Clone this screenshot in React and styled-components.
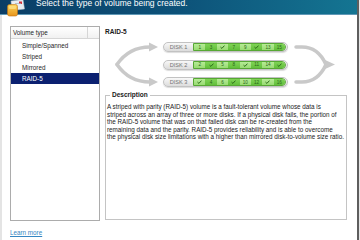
import styled, { createGlobalStyle } from "styled-components";

const GlobalStyle = createGlobalStyle`
  html, body {
    margin: 0;
    padding: 0;
    background: #e6e6e6;
  }
  body {
    font-family: "Liberation Sans", Arial, sans-serif;
  }
`;

const Screen = styled.div`
  display: flex;
  width: 360px;
  height: 240px;
  overflow: hidden;
  background: #e6e6e6;
`;

const Frame = styled.div`
  display: flex;
  flex-direction: column;
  width: 357px;
  height: 240px;
  background: #fff;
  border-right: 2px solid #5e5e5e;
`;

const Header = styled.div`
  display: flex;
  align-items: flex-start;
  flex-shrink: 0;
  height: 14px;
  padding-left: 6px;
  background: linear-gradient(90deg, #0b3e66 0%, #0d5279 50%, #147592 100%);
  border-bottom: 1px solid #5f98b6;
`;

const HeaderIcon = styled.svg`
  position: relative;
  z-index: 1;
  flex-shrink: 0;
`;

const HeaderTitle = styled.div`
  margin-left: 10px;
  font-size: 8.5px;
  line-height: 7px;
  color: #fff;
  white-space: nowrap;
`;

const Content = styled.div`
  display: flex;
  flex-direction: column;
  flex: 1;
  padding: 11px 0 0 8px;
  border-left: 2px solid #e4e4e4;
`;

const MainRow = styled.div`
  display: flex;
  gap: 5px;
  height: 195px;
`;

const ListBox = styled.div`
  box-sizing: border-box;
  width: 90px;
  height: 195px;
  border: 1px solid #acacac;
  background: #fff;
  font-size: 6.3px;
`;

const ListHeader = styled.div`
  display: flex;
  height: 11px;
  border-bottom: 1px solid #d6d6d6;
  background: linear-gradient(#ffffff, #f1f1f1);
`;

const HeaderCell = styled.div`
  width: 74px;
  padding-left: 2px;
  line-height: 11px;
  color: #1e1e1e;
  border-right: 1px solid #d6d6d6;
`;

const Items = styled.div`
  padding-top: 1px;
`;

const Item = styled.div`
  height: 11px;
  line-height: 11px;
  padding-left: 11px;
  color: ${({ $selected }) => ($selected ? "#fff" : "#1e1e1e")};
  background: ${({ $selected }) => ($selected ? "#0b2070" : "transparent")};
`;

const Panel = styled.div`
  display: flex;
  flex-direction: column;
  width: 242px;
`;

const PanelTitle = styled.div`
  padding-top: 2px;
  font-size: 6.5px;
  font-weight: bold;
  line-height: 8px;
  color: #1a1a1a;
`;

const Diagram = styled.div`
  display: flex;
  align-items: center;
  gap: 2px;
  margin-top: 6px;
  padding-left: 8px;
  height: 45px;
`;

const DiskColumn = styled.div`
  display: flex;
  flex-direction: column;
  gap: 7.5px;
`;

const DiskRow = styled.div`
  box-sizing: border-box;
  display: flex;
  align-items: center;
  width: 125px;
  height: 10px;
  padding: 0 1px 0 0;
  border: 1px solid #c2c2c2;
  border-radius: 5px;
  background: linear-gradient(#f8f8f8, #dcdcdc);
  box-shadow: 0 1px 1px rgba(0, 0, 0, 0.14);
`;

const DiskLabel = styled.div`
  width: 29px;
  font-size: 5.6px;
  line-height: 8px;
  text-align: center;
  color: #737373;
  white-space: nowrap;
`;

const Cells = styled.div`
  display: flex;
  width: 93px;
  height: 8px;
  border: 0.5px solid #57a834;
  border-radius: 0 4px 4px 0;
  overflow: hidden;
  box-sizing: border-box;
`;

const Cell = styled.div`
  display: flex;
  align-items: center;
  justify-content: center;
  flex: 1;
  font-size: 4.6px;
  color: #2a6619;
  background: ${({ $dark }) =>
    $dark
      ? "linear-gradient(#7fd355, #63bf3c)"
      : "linear-gradient(#b6eb96, #98db72)"};
`;

const Description = styled.fieldset`
  box-sizing: border-box;
  height: 129px;
  margin: 4px 0 0 0;
  padding: 4px 1px 0 1px;
  border: 1px solid #c4c4c4;
  min-inline-size: 0;
`;

const Legend = styled.legend`
  margin-left: 3px;
  padding: 0 2px;
  font-size: 6.5px;
  font-weight: bold;
  line-height: 8px;
  color: #1a1a1a;
`;

const Line = styled.div`
  font-size: 6.3px;
  line-height: 7.5px;
  color: #1a1a1a;
  white-space: nowrap;
`;

const LearnMore = styled.a`
  margin-top: 8px;
  align-self: flex-start;
  font-size: 6.3px;
  line-height: 8px;
  color: #3586c2;
  text-decoration: underline;
`;

const disks = [
  ["1", "3", "v", "7", "9", "v", "13", "15"],
  ["2", "v", "5", "8", "v", "11", "14", "v"],
  ["v", "4", "6", "v", "10", "12", "v", "16"],
];

const description = [
  "A striped with parity (RAID-5) volume is a fault-tolerant volume whose data is",
  "striped across an array of three or more disks. If a physical disk fails, the portion of",
  "the RAID-5 volume that was on that failed disk can be re-created from the",
  "remaining data and the parity. RAID-5 provides reliability and is able to overcome",
  "the physical disk size limitations with a higher than mirrored disk-to-volume size ratio.",
];

const Check = () => (
  <svg width="5" height="4" viewBox="0 0 5 4">
    <path d="M0.5 2.1 L1.9 3.4 L4.5 0.6" fill="none" stroke="#2b6a19" strokeWidth="1" />
  </svg>
);

const VolumeIcon = () => (
  <HeaderIcon width="20" height="17" viewBox="0 0 20 17">
    <defs>
      <linearGradient id="vol" x1="0" y1="0" x2="0" y2="1">
        <stop offset="0" stopColor="#fbd45a" />
        <stop offset="1" stopColor="#e8951c" />
      </linearGradient>
    </defs>
    <polygon points="5,1 17,-0.5 18.5,9 6,10.5" fill="#e9eef2" stroke="#b9c4cc" strokeWidth="0.5" />
    <rect x="13" y="1.5" width="3" height="2.5" fill="#d8323a" />
    <rect x="9" y="3" width="6" height="0.7" fill="#9fb0bc" />
    <rect x="1.5" y="4.5" width="10" height="11.5" rx="2" fill="url(#vol)" stroke="#c27412" strokeWidth="0.6" />
    <rect x="3" y="6" width="7" height="3" rx="1" fill="#fde58c" opacity="0.7" />
  </HeaderIcon>
);

const SplitArrow = () => (
  <svg width="48" height="45" viewBox="0 0 48 45">
    <g fill="none" stroke="#c9c9c9" strokeWidth="3.5" strokeLinecap="round">
      <path d="M4 22.5 Q 16 5 37 5" />
      <path d="M4 22.5 Q 16 40 37 40" />
    </g>
    <g fill="#c9c9c9">
      <polygon points="36,0.5 45,5 36,9.5" />
      <polygon points="36,35.5 45,40 36,44.5" />
    </g>
  </svg>
);

const MergeArrow = () => (
  <svg width="48" height="45" viewBox="0 0 48 45">
    <g fill="none" stroke="#c9c9c9" strokeWidth="3.5" strokeLinecap="round">
      <path d="M6 5 L12 5 Q 28 5 36 22.5" />
      <path d="M6 40 L12 40 Q 28 40 36 22.5" />
    </g>
    <polygon points="34,17.5 45,22.5 34,27.5" fill="#c9c9c9" />
  </svg>
);

const volumeTypes = ["Simple/Spanned", "Striped", "Mirrored", "RAID-5"];

const App = () => {
  return (
    <>
      <GlobalStyle />
      <Screen>
        <Frame>
          <Header>
            <VolumeIcon />
            <HeaderTitle>Select the type of volume being created.</HeaderTitle>
          </Header>

          <Content>
            <MainRow>
              <ListBox>
                <ListHeader>
                  <HeaderCell>Volume type</HeaderCell>
                </ListHeader>
                <Items>
                  {volumeTypes.map((name) => (
                    <Item key={name} $selected={name === "RAID-5"}>
                      {name}
                    </Item>
                  ))}
                </Items>
              </ListBox>

              <Panel>
                <PanelTitle>RAID-5</PanelTitle>

                <Diagram>
                  <SplitArrow />
                  <DiskColumn>
                    {disks.map((cells, i) => (
                      <DiskRow key={i}>
                        <DiskLabel>DISK {i + 1}</DiskLabel>
                        <Cells>
                          {cells.map((c, j) => (
                            <Cell key={j} $dark={j % 2 === 1}>
                              {c === "v" ? <Check /> : c}
                            </Cell>
                          ))}
                        </Cells>
                      </DiskRow>
                    ))}
                  </DiskColumn>
                  <MergeArrow />
                </Diagram>

                <Description>
                  <Legend>Description</Legend>
                  {description.map((line) => (
                    <Line key={line}>{line}</Line>
                  ))}
                </Description>
              </Panel>
            </MainRow>

            <LearnMore href="#">Learn more</LearnMore>
          </Content>
        </Frame>
      </Screen>
    </>
  );
};

export default App;
